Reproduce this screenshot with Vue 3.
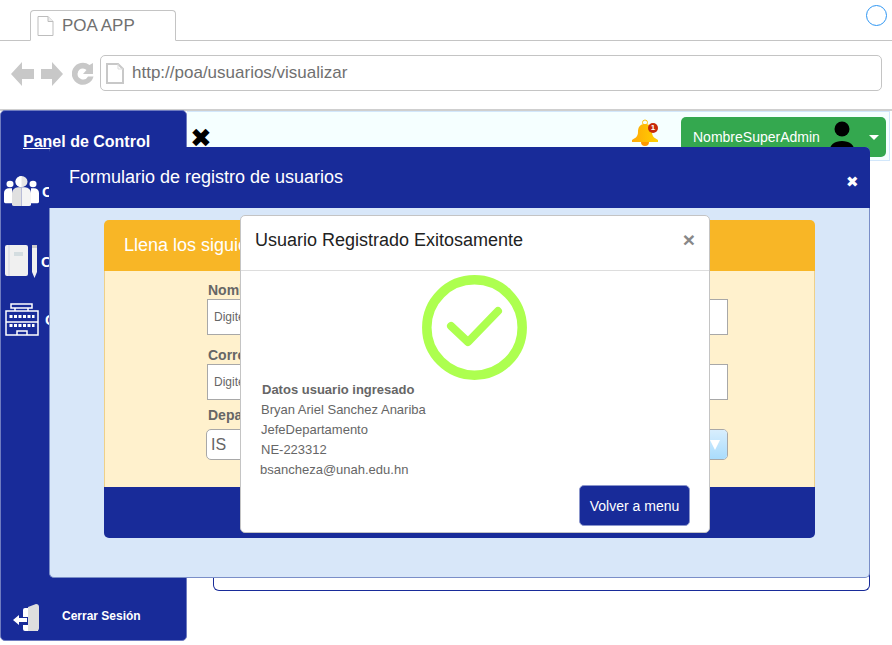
<template>
  <div class="window">
    <div class="tabbar">
      <div class="tab">
        <svg class="page-icon" width="17" height="20" viewBox="0 0 17 20"><path d="M1 .5h10l5 5v14H1z" fill="#fff" stroke="#bdbdbd"/><path d="M11 .5v5h5" fill="#eee" stroke="#bdbdbd"/></svg>
        <span>POA APP</span>
      </div>
      <span class="circle"></span>
    </div>

    <div class="navbar">
      <svg width="23" height="24" viewBox="0 0 23 24"><path d="M0 12 11 0v7h12v10H11v7z" fill="#c8c8c8"/></svg>
      <svg class="fwd" width="22" height="24" viewBox="0 0 22 24"><path d="M22 12 11 0v7H0v10h11v7z" fill="#c8c8c8"/></svg>
      <svg class="reload" width="22" height="24" viewBox="0 0 22 24"><path d="M11 6.500a5.500 5.500 0 1 0 5 8h5.500A11 11 0 1 1 17.500 3L21 1v11H11l3.500-4A5 5 0 0 0 11 6.500z" fill="#c8c8c8"/></svg>
      <div class="address">
        <svg width="18" height="21" viewBox="0 0 18 21"><path d="M1 1h11l5 5v14H1z" fill="#fff" stroke="#c8c8c8" stroke-width="2"/><path d="M12 1v5h5" fill="none" stroke="#ddd"/></svg>
        <span>http://poa/usuarios/visualizar</span>
      </div>
    </div>

    <div class="app">
      <aside class="sidebar">
        <h3 class="panel-title">Panel de Control</h3>
        <div class="side-item users">
          <svg width="35" height="30" viewBox="0 0 35 32" preserveAspectRatio="none">
            <circle cx="6" cy="8.500" r="3.500" fill="#fff"/>
            <circle cx="29" cy="8.500" r="3.500" fill="#fff"/>
            <path d="M0 26v-8a5 5 0 0 1 5-5h3v16H2a2 2 0 0 1-2-3zM35 26v-8a5 5 0 0 0-5-5h-3v16h6a2 2 0 0 0 2-3z" fill="#fff"/>
            <circle cx="17.500" cy="6" r="6" fill="#e6e6e6"/>
            <path d="M17.500 0a6 6 0 0 0 0 12z" fill="#fff"/>
            <path d="M8 18a6 6 0 0 1 6-6h3.500v20H10a2 2 0 0 1-2-2z" fill="#e0e0e0"/>
            <path d="M27 18a6 6 0 0 0-6-6h-3.500v20H25a2 2 0 0 0 2-2z" fill="#f4f4f4"/>
          </svg>
          <span>C</span>
        </div>
        <div class="side-item notes">
          <svg width="33" height="34" viewBox="0 0 33 34">
            <rect x="0" y="1" width="23" height="31" rx="2" fill="#f0f0f0"/>
            <path d="M4 1v31" stroke="#d0d4e0"/>
            <rect x="9" y="8" width="9" height="4" fill="#d4dde0"/>
            <path d="M27 1h5v3h-5z" fill="#ccc"/>
            <path d="M27 4h5v24l-2.500 6-2.500-6z" fill="#f0f0f0"/>
          </svg>
          <span>C</span>
        </div>
        <div class="side-item building">
          <svg width="34" height="33" viewBox="0 0 34 33" fill="none" stroke="#fff" stroke-width="1.500">
            <path d="M6 1h21v4H6z"/>
            <path d="M10 5v3M23 5v3"/>
            <path d="M1 8h32v24H1z"/>
            <path d="M1 19h32" />
            <path d="M12 32v-4h10v4"/>
            <path d="M4.500 13.500h25M4.500 22.500h25" stroke="#fff" stroke-width="3" stroke-dasharray="3 1.500"/>
          </svg>
          <span>C</span>
        </div>
        <div class="side-spacer"></div>
        <div class="logout">
          <svg width="27" height="27" viewBox="0 0 27 27">
            <path d="M10 6a2 2 0 0 1 2-2h13v23H12a2 2 0 0 1-2-2v-4h5v-8h-5z" fill="#fff"/>
            <path d="M15 3l8-3a3 3 0 0 1 3 3v21a3 3 0 0 1-3 3h-8z" fill="#dedede"/>
            <path d="M0 16l6-5v3h8v4H6v3z" fill="#fff"/>
          </svg>
          <span class="logout-text">Cerrar Sesión</span>
        </div>
      </aside>

      <div class="main">
        <header class="topbar">
          <span class="menu-x">✖</span>
          <div class="bell">
            <svg width="28" height="30" viewBox="0 0 28 30">
              <defs>
                <linearGradient id="bellfill" x1="0" y1="0" x2="1" y2="0">
                  <stop offset="0" stop-color="#ffa908"/>
                  <stop offset="1" stop-color="#ffd000"/>
                </linearGradient>
              </defs>
              <circle cx="14" cy="3.500" r="2.500" fill="none" stroke="#ffc107"/>
              <path d="M14 5c5 0 7 3 7 8 0 5 3 6 6 8v2H1v-2c3-2 6-3 6-8 0-5 2-8 7-8z" fill="url(#bellfill)"/>
              <path d="M10 23h8a4 4 0 0 1-8 0z" fill="#ff9800"/>
            </svg>
            <span class="badge">1</span>
          </div>
          <div class="user-btn">
            <span class="user-name">NombreSuperAdmin</span>
            <svg width="26" height="36" viewBox="0 0 26 36"><circle cx="13" cy="8" r="7.500" fill="#000"/><path d="M0 33c0-10 6-13 13-13s13 3 13 13z" fill="#000"/></svg>
            <span class="caret"></span>
          </div>
        </header>
        <div class="content-card"></div>
      </div>

      <section class="form-modal">
        <div class="form-modal-head">
          <span>Formulario de registro de usuarios</span>
          <span class="form-close">✖</span>
        </div>
        <div class="form-modal-body">
          <div class="form-card">
            <div class="form-card-head">Llena los siguientes campos</div>
            <div class="form-card-body">
              <label>Nombre</label>
              <div class="fake-input">Digite nombre</div>
              <label>Correo</label>
              <div class="fake-input">Digite correo</div>
              <label class="tight">Departamento</label>
              <div class="fake-select">
                <span>IS</span>
                <span class="select-arrow"></span>
              </div>
            </div>
            <div class="form-card-foot"></div>
          </div>
        </div>
      </section>

      <section class="ok-modal">
        <div class="ok-head">
          <span>Usuario Registrado Exitosamente</span>
          <span class="ok-close">×</span>
        </div>
        <div class="ok-body">
          <svg class="ok-check" width="105" height="105" viewBox="0 0 105 105" fill="none" stroke="#adff4f">
            <circle cx="52.500" cy="52.500" r="47.700" stroke-width="9.500"/>
            <path d="M29 51 46 67 76 36" stroke-width="8" stroke-linecap="round" stroke-linejoin="round"/>
          </svg>
          <div class="ok-data">
            <strong>Datos usuario ingresado</strong>
            <span v-for="line in datos" :key="line">{{ line }}</span>
            <span class="email">bsancheza@unah.edu.hn</span>
          </div>
          <div class="ok-foot">
            <button class="back-btn">Volver a menu</button>
          </div>
        </div>
      </section>
    </div>
  </div>
</template>

<script setup>
const datos = ['Bryan Ariel Sanchez Anariba', 'JefeDepartamento', 'NE-223312']
</script>

<style>
html, body { background: #fff; }
</style>

<style scoped>
.window {
  width: 892px;
  height: 645px;
  overflow: hidden;
  font-family: "Liberation Sans", Arial, sans-serif;
  color: #666;
}

.tabbar {
  padding: 10px 0 0 30px;
  height: 30px;
  border-bottom: 1px solid #c4c4c4;
  display: flex;
  position: relative;
}
.tab {
  width: 146px;
  height: 31px;
  box-sizing: border-box;
  border: 1px solid #c4c4c4;
  border-bottom: 1px solid #fff;
  border-radius: 4px 4px 0 0;
  background: #fff;
  display: flex;
  align-items: center;
  padding: 0 6px;
  gap: 8px;
  font-size: 17px;
  color: #707070;
}
.circle {
  position: absolute;
  right: 5px;
  top: 5px;
  width: 19px;
  height: 19px;
  border: 1px solid #2e96f3;
  border-radius: 50%;
}

.navbar {
  height: 69px;
  padding: 14px 10px 0 11px;
  box-sizing: border-box;
  display: flex;
  align-items: flex-start;
}
.navbar > svg { margin-top: 7px; }
.navbar .fwd { margin-left: 7px; }
.navbar .reload { margin-left: 9px; margin-right: 6px; }
.address {
  flex: 1;
  height: 36px;
  box-sizing: border-box;
  border: 1px solid #c4c4c4;
  border-radius: 5px;
  display: flex;
  align-items: center;
  gap: 8px;
  padding-left: 5px;
  font-size: 17px;
  color: #707070;
}

.app {
  position: relative;
  height: 536px;
  border-top: 2px solid #cfcfcf;
  margin-top: -1px;
  display: flex;
  box-sizing: border-box;
}

.sidebar {
  width: 187px;
  height: 531px;
  flex-shrink: 0;
  box-sizing: border-box;
  margin-top: -1px;
  background: #182b99;
  border: 1px solid #6f7cc0;
  border-radius: 5px;
  color: #fff;
  display: flex;
  flex-direction: column;
  font-weight: bold;
}
.panel-title {
  margin: 21px 0 0 22px;
  font-size: 16px;
  line-height: 20px;
  text-decoration: underline;
}
.side-item {
  display: flex;
  align-items: center;
  gap: 3px;
  font-size: 15px;
}
.users { margin: 24px 0 0 3px; height: 30px; }
.notes { margin: 38px 0 0 4px; height: 34px; gap: 3px; }
.building { margin: 25px 0 0 4px; height: 33px; gap: 6px; }
.side-spacer { flex: 1; }
.logout {
  display: flex;
  align-items: center;
  gap: 22px;
  margin: 0 0 9px 12px;
  font-size: 12px;
}
.logout-text { margin-bottom: 4px; }

.main {
  flex: 1;
  padding-right: 2px;
  display: flex;
  flex-direction: column;
}
.topbar {
  height: 50px;
  box-sizing: border-box;
  background: #f5ffff;
  border: 1px solid #d2e7fb;
  border-left: 0;
  display: flex;
  align-items: flex-start;
  padding: 5px 3px 0 0;
}
.menu-x {
  margin: 7px 0 0 3px;
  font-size: 26px;
  line-height: 28px;
  color: #000;
}
.bell {
  position: relative;
  margin: 2px 22px 0 auto;
  width: 28px;
  height: 30px;
}
.badge {
  position: absolute;
  right: 1px;
  top: 4px;
  width: 10px;
  height: 10px;
  border-radius: 50%;
  background: #c62a0a;
  color: #fff;
  font-size: 8px;
  line-height: 10px;
  text-align: center;
  font-weight: bold;
}
.user-btn {
  width: 205px;
  height: 40px;
  box-sizing: border-box;
  background: #34a84f;
  border-radius: 5px;
  color: #fff;
  display: flex;
  align-items: center;
  padding: 0 7px 0 12px;
  font-size: 14px;
}
.user-name { width: 136px; }
.user-btn svg { margin-top: 3px; }
.caret {
  margin-left: 14px;
  border-left: 5px solid transparent;
  border-right: 5px solid transparent;
  border-top: 5px solid #fff;
}
.content-card {
  height: 429px;
  margin: 0 20px 0 26px;
  background: #fff;
  border: 1px solid #182b99;
  border-top: 0;
  border-radius: 0 0 6px 6px;
}

.form-modal {
  position: absolute;
  left: 49px;
  top: 36px;
  width: 821px;
  height: 431px;
  box-sizing: border-box;
  background: #d8e7f9;
  border: 1px solid #7a8ec8;
  border-top: 0;
  border-radius: 5px;
  display: flex;
  flex-direction: column;
}
.form-modal-head {
  height: 61px;
  margin: 0 -1px;
  background: #182b99;
  border-radius: 5px 5px 0 0;
  color: #fff;
  font-size: 18px;
  display: flex;
  justify-content: space-between;
  align-items: center;
  padding: 0 11px 0 20px;
}
.form-close {
  font-size: 15px;
  margin-top: 8px;
}
.form-modal-body { padding: 12px 54px 0; }
.form-card {
  height: 318px;
  display: flex;
  flex-direction: column;
  border-radius: 5px;
  overflow: hidden;
}
.form-card-head {
  height: 51px;
  background: #f8b626;
  color: #fff;
  font-size: 18px;
  line-height: 51px;
  padding-left: 20px;
}
.form-card-body {
  height: 216px;
  box-sizing: border-box;
  background: #fff1cd;
  border: 1px solid #eed089;
  border-width: 0 1px;
  padding: 10px 86px 0 102px;
  display: flex;
  flex-direction: column;
}
.form-card-body label {
  font-size: 14px;
  line-height: 18px;
  font-weight: bold;
  color: #666;
  margin-left: 1px;
}
.form-card-body label.tight { margin-top: -5px; }
.fake-input {
  height: 36px;
  flex-shrink: 0;
  box-sizing: border-box;
  border: 1px solid #a8a8a8;
  background: #fff;
  line-height: 34px;
  padding-left: 6px;
  font-size: 12px;
  margin-bottom: 11px;
}
.fake-select {
  height: 31px;
  margin: 5px 0 0 -1px;
  flex-shrink: 0;
  box-sizing: border-box;
  border: 1px solid #a8a8a8;
  border-radius: 5px;
  background: #fff;
  font-size: 16px;
  display: flex;
  justify-content: space-between;
  align-items: stretch;
  line-height: 29px;
  padding-left: 4px;
  overflow: hidden;
}
.select-arrow {
  width: 30px;
  background: linear-gradient(#d8eefd, #a9dcfd);
  position: relative;
}
.select-arrow::after {
  content: "";
  position: absolute;
  right: 7px;
  top: 10px;
  border-left: 5px solid transparent;
  border-right: 5px solid transparent;
  border-top: 10px solid #fff;
}
.form-card-foot {
  height: 51px;
  background: #182b99;
}

.ok-modal {
  position: absolute;
  left: 240px;
  top: 104px;
  width: 470px;
  height: 318px;
  box-sizing: border-box;
  background: #fff;
  border: 1px solid #c4c4c4;
  border-radius: 5px;
  display: flex;
  flex-direction: column;
}
.ok-head {
  height: 55px;
  flex-shrink: 0;
  box-sizing: border-box;
  border-bottom: 1px solid #ddd;
  display: flex;
  justify-content: space-between;
  padding: 12px 14px 0 14px;
  font-size: 18px;
  line-height: 24px;
  color: #222;
}
.ok-close {
  font-size: 21px;
  font-weight: bold;
  color: #888;
}
.ok-body {
  flex: 1;
  padding: 4px 19px 0 19px;
  display: flex;
  flex-direction: column;
}
.ok-check { align-self: center; margin-left: -1px; }
.ok-data {
  display: flex;
  flex-direction: column;
  font-size: 13px;
  line-height: 20px;
  color: #666;
}
.ok-data span { margin-left: 1px; }
.ok-data strong { margin-left: 2px; }
.ok-data .email { margin-left: 0; }
.ok-foot {
  display: flex;
  justify-content: flex-end;
  margin-top: 5px;
}
.back-btn {
  width: 111px;
  height: 41px;
  border: 1px solid #8b96cc;
  border-radius: 5px;
  background: #182b99;
  color: #fff;
  font-family: inherit;
  font-size: 14px;
  padding: 0;
}
</style>
